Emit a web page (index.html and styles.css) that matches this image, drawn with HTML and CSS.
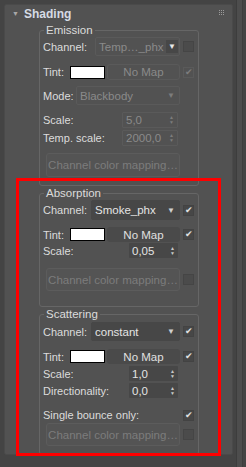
FILE: index.html
```html
<!DOCTYPE html>
<html lang="en">
<head>
    <meta charset="UTF-8">
    <title>Shading</title>
    <link rel="stylesheet" href="styles.css">
</head>
<body>
    <div class="panel">
        <div class="rollout-header">
            <span class="twisty">&#9660;</span>
            <span class="rollout-title">Shading</span>
            <svg class="grip" width="5" height="5" viewBox="0 0 5 5">
                <rect x="0" y="0" width="1" height="1"/><rect x="2" y="0" width="1" height="1"/><rect x="4" y="0" width="1" height="1"/>
                <rect x="0" y="2" width="1" height="1"/><rect x="2" y="2" width="1" height="1"/><rect x="4" y="2" width="1" height="1"/>
                <rect x="0" y="4" width="1" height="1"/><rect x="2" y="4" width="1" height="1"/><rect x="4" y="4" width="1" height="1"/>
            </svg>
        </div>

        <div class="groups">
            <!-- Emission (disabled) -->
            <fieldset class="group disabled">
                <legend>Emission</legend>
                <div class="row r-channel">
                    <span class="label">Channel:</span>
                    <div class="dropdown w-85"><span>Temp…_phx</span><span class="arrow solid">&#9660;</span></div>
                    <span class="check empty"></span>
                </div>
                <div class="row r-tint">
                    <span class="label tint-label">Tint:</span>
                    <span class="swatch"></span>
                    <div class="map-btn">No Map</div>
                    <span class="check ghost">&#10004;</span>
                </div>
                <div class="row r-mode">
                    <span class="label">Mode:</span>
                    <div class="dropdown w-104"><span>Blackbody</span><span class="arrow">&#9660;</span></div>
                    <span class="slot"></span>
                </div>
                <div class="row r-spin1">
                    <span class="label">Scale:</span>
                    <div class="spinner w-56"><span>5,0</span><span class="updown">&#9650;<br>&#9660;</span></div>
                    <span class="slot wide"></span>
                </div>
                <div class="row r-spin2">
                    <span class="label">Temp. scale:</span>
                    <div class="spinner w-56"><span>2000,0</span><span class="updown">&#9650;<br>&#9660;</span></div>
                    <span class="slot wide"></span>
                </div>
                <div class="row r-button">
                    <div class="mapping-btn">Channel color mapping…</div>
                    <span class="slot"></span>
                </div>
            </fieldset>

            <!-- Absorption -->
            <fieldset class="group">
                <legend>Absorption</legend>
                <div class="row r-channel2">
                    <span class="label">Channel:</span>
                    <div class="dropdown w-89"><span>Smoke_phx</span><span class="arrow">&#9660;</span></div>
                    <span class="check">&#10004;</span>
                </div>
                <div class="row r-tint2">
                    <span class="label tint-label">Tint:</span>
                    <span class="swatch"></span>
                    <div class="map-btn">No Map</div>
                    <span class="check">&#10004;</span>
                </div>
                <div class="row r-spin3">
                    <span class="label">Scale:</span>
                    <div class="spinner w-49"><span>0,05</span><span class="updown">&#9650;<br>&#9660;</span></div>
                    <span class="slot wide"></span>
                </div>
                <div class="row r-button2">
                    <div class="mapping-btn off">Channel color mapping…</div>
                    <span class="check empty"></span>
                </div>
            </fieldset>

            <!-- Scattering -->
            <fieldset class="group last">
                <legend>Scattering</legend>
                <div class="row r-channel3">
                    <span class="label">Channel:</span>
                    <div class="dropdown w-89"><span>constant</span><span class="arrow">&#9660;</span></div>
                    <span class="check">&#10004;</span>
                </div>
                <div class="row r-tint3">
                    <span class="label tint-label">Tint:</span>
                    <span class="swatch"></span>
                    <div class="map-btn">No Map</div>
                    <span class="check">&#10004;</span>
                </div>
                <div class="row r-spin4">
                    <span class="label">Scale:</span>
                    <div class="spinner w-49"><span>1,0</span><span class="updown">&#9650;<br>&#9660;</span></div>
                    <span class="slot wide"></span>
                </div>
                <div class="row r-spin5">
                    <span class="label">Directionality:</span>
                    <div class="spinner w-49"><span>0,0</span><span class="updown">&#9650;<br>&#9660;</span></div>
                    <span class="slot wide"></span>
                </div>
                <div class="row r-bounce">
                    <span class="label">Single bounce only:</span>
                    <span class="check">&#10004;</span>
                </div>
                <div class="row r-button3">
                    <div class="mapping-btn off">Channel color mapping…</div>
                    <span class="check empty"></span>
                </div>
            </fieldset>
        </div>

        <!-- annotation box -->
        <div class="highlight"></div>
    </div>

    <div class="scrollbar"></div>
</body>
</html>
```

FILE: styles.css
```css
* {
    margin: 0;
    padding: 0;
    box-sizing: border-box;
}

body {
    width: 246px;
    height: 467px;
    background: #444444;
    font-family: 'Liberation Sans', Arial, sans-serif;
    font-size: 11px;
    color: #dcdcdc;
    display: flex;
    align-items: flex-start;
    padding: 4px 0 0 4px;
    overflow: hidden;
}

.panel {
    position: relative;
    width: 229px;
    height: 451px;
    background: #525252;
    border: 1px solid #4a4a4a;
    border-radius: 2px;
}

.scrollbar {
    width: 7px;
    height: 467px;
    margin-top: -4px;
    margin-left: 3px;
    background: #4d4d4d;
    border-left: 1px solid #3d3d3d;
    border-right: 1px solid #3d3d3d;
}

/* header */
.rollout-header {
    height: 18px;
    display: flex;
    align-items: center;
    padding-left: 7px;
}

.twisty {
    font-size: 7px;
    color: #a8a8a8;
    width: 12px;
    margin-top: -2px;
}

.rollout-title {
    font-weight: bold;
    font-size: 12px;
    color: #d6dbe4;
    flex: 1;
}

.grip {
    fill: #9a9a9a;
    margin-right: 8px;
    margin-top: -4px;
}

/* group boxes */
.groups {
    padding-left: 34px;
}

.group {
    width: 160px;
    border: 1px solid #666666;
    border-radius: 3px;
    padding: 0 4px 8px 3px;
    min-width: 0;
}

.group legend {
    line-height: 14px;
    font-size: 11.5px;
    padding: 0 2px;
    margin-left: 1px;
    color: #dcdcdc;
}

.row {
    display: flex;
    align-items: center;
}

.label {
    flex: 1;
    white-space: nowrap;
}

.tint-label {
    flex: none;
    width: 27px;
}

/* row heights and spacing */
.r-channel { height: 19px; }
.r-tint { height: 16px; margin-top: 8px; }
.r-mode { height: 19px; margin-top: 6px; }
.r-spin1 { height: 16px; margin-top: 7px; }
.r-spin2 { height: 16px; margin-top: 2px; }
.r-button { height: 24px; margin-top: 7px; }

.r-channel2 { height: 20px; }
.r-tint2 { height: 15px; margin-top: 7px; }
.r-spin3 { height: 15px; margin-top: 1px; }
.r-button2 { height: 23px; margin-top: 10px; margin-bottom: 7px; }

.r-channel3 { height: 19px; margin-top: 1px; }
.r-tint3 { height: 15px; margin-top: 8px; }
.r-spin4 { height: 15px; margin-top: 2px; }
.r-spin5 { height: 15px; margin-top: 2px; }
.r-bounce { height: 16px; margin-top: 9px; }
.r-button3 { height: 23px; }

/* controls */
.dropdown {
    height: 100%;
    display: flex;
    align-items: center;
    justify-content: space-between;
    padding: 0 4px 0 3px;
    background: #474747;
    border: 1px solid #474747;
    border-radius: 2px;
    color: #e4e4e4;
    font-size: 11.5px;
}

.w-85 { width: 85px; }
.w-89 { width: 89px; }
.w-104 { width: 104px; }
.w-56 { width: 56px; }
.w-49 { width: 49px; }

.arrow {
    font-size: 8px;
    color: #d0d0d0;
}

.swatch {
    width: 35px;
    height: 13px;
    background: #ffffff;
    border: 1px solid #000000;
    flex: none;
}

.map-btn {
    width: 74px;
    height: 100%;
    margin-left: 2px;
    background: #4a4a4a;
    border-radius: 3px;
    display: flex;
    align-items: center;
    justify-content: center;
    color: #e0e0e0;
    font-size: 11.5px;
}

.spinner {
    height: 100%;
    display: flex;
    align-items: center;
    justify-content: space-between;
    padding: 0 3px 0 3px;
    background: #474747;
    border-radius: 1px;
    color: #e4e4e4;
    font-size: 11.5px;
}

.updown {
    font-size: 5px;
    line-height: 5px;
    color: #c8c8c8;
    text-align: center;
}

.check {
    width: 11px;
    height: 11px;
    margin-left: 3px;
    flex: none;
    background: #474747;
    border: 1px solid #434343;
    color: #e0e0e0;
    font-size: 9px;
    line-height: 9px;
    text-align: center;
}

.check.empty {
    color: transparent;
    background: #4b4b4b;
    border-color: #454545;
}

.slot {
    width: 11px;
    margin-left: 3px;
    flex: none;
}

.slot.wide {
    width: 14px;
    margin-left: 2px;
}

.mapping-btn {
    flex: 1;
    height: 100%;
    margin-left: 3px;
    border: 1px solid #5c5c5c;
    border-radius: 3px;
    background: #545454;
    display: flex;
    align-items: center;
    justify-content: center;
    color: #7c7c7c;
    font-size: 11.5px;
    white-space: nowrap;
}

/* disabled group */
.group.disabled .dropdown,
.group.disabled .spinner,
.group.disabled .map-btn {
    background: transparent;
    border: 1px solid #5a5a5a;
    color: #8a8a8a;
}

.group.disabled .dropdown.w-85 {
    padding-right: 1px;
}

.group.disabled .arrow.solid {
    background: #474747;
    color: #e8e8e8;
    width: 12px;
    height: 13px;
    line-height: 13px;
    text-align: center;
}

.group.disabled .arrow,
.group.disabled .updown {
    color: #7c7c7c;
}

.check.ghost {
    background: transparent;
    border: 1px solid #5a5a5a;
    color: #7c7c7c;
}

/* red annotation frame */
.highlight {
    position: absolute;
    left: 11px;
    top: 173px;
    width: 205px;
    height: 278px;
    border: 3px solid #ff0000;
    pointer-events: none;
}
```
